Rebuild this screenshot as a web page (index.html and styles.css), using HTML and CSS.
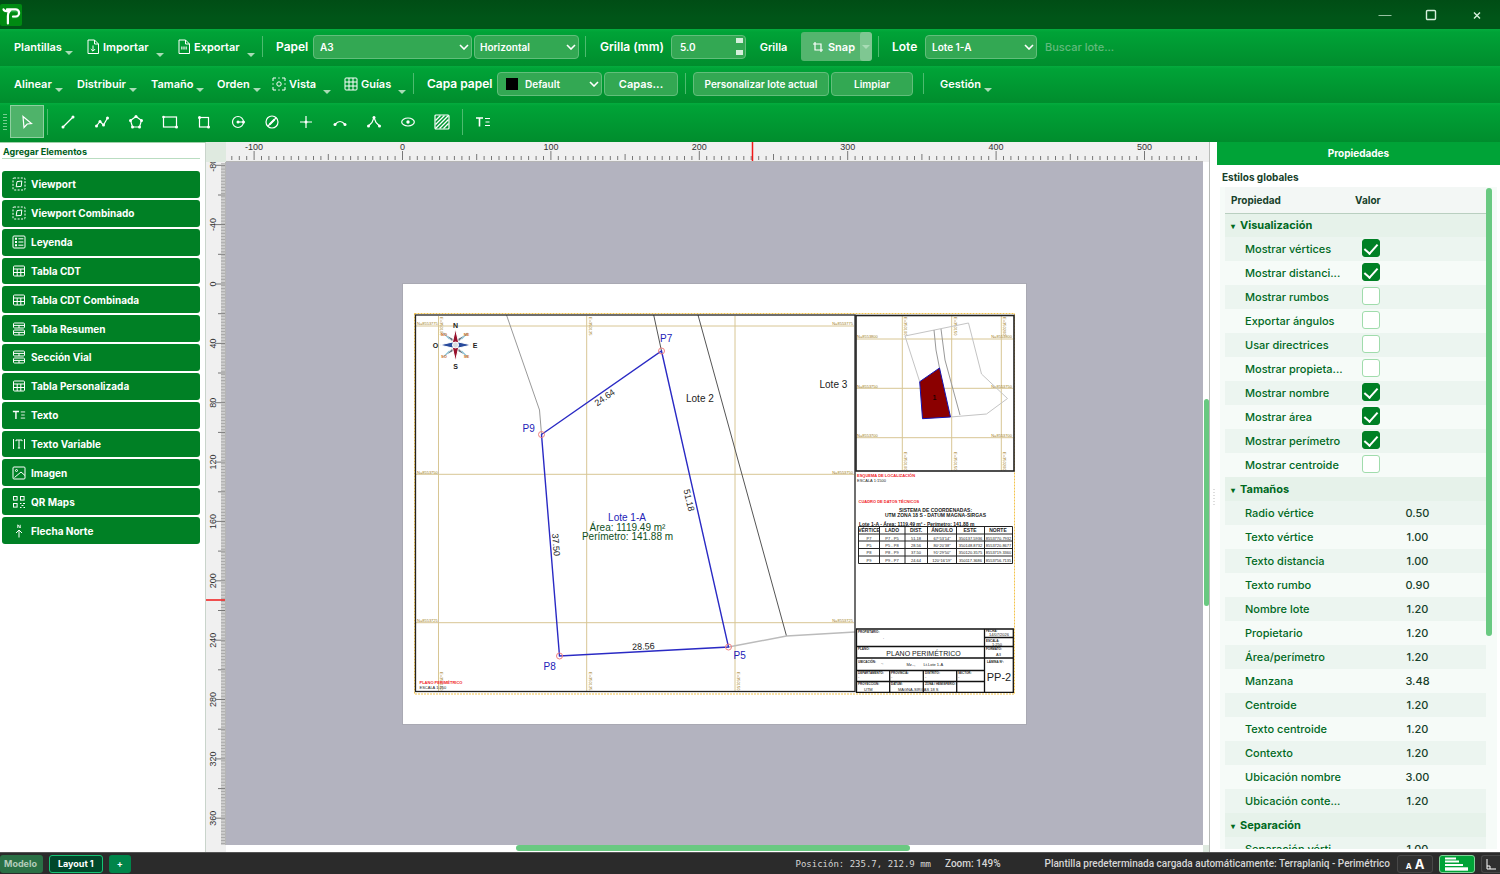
FILE: index.html
```html
<!DOCTYPE html>
<html lang="es">
<head>
<meta charset="utf-8">
<title>Terraplaniq</title>
<link rel="stylesheet" href="styles.css">
</head>
<body>
<svg class="defs" aria-hidden="true">
  <defs>
    <symbol id="i-viewport" viewBox="0 0 14 14"><rect x="1" y="1" width="12" height="12" rx="1" stroke-dasharray="2 1.4"/><path d="M5 4.6 9.8 4 9.2 9.4 4.2 9.8Z"/></symbol>
    <symbol id="i-legend" viewBox="0 0 14 14"><rect x="1" y="1" width="12" height="12" rx="1"/><path d="M3 3.8h2M3 7h2M3 10.2h2" stroke-width="2"/><path d="M6.4 3.8h5M6.4 7h5M6.4 10.2h5"/></symbol>
    <symbol id="i-table" viewBox="0 0 14 14"><rect x="1.5" y="2" width="11" height="10" rx="1"/><path d="M1.5 5h11M1.5 8.5h11M5.2 5v7M8.8 5v7"/></symbol>
    <symbol id="i-summary" viewBox="0 0 14 14"><rect x="1.5" y="1" width="11" height="5" rx="1"/><rect x="1.5" y="8" width="11" height="5" rx="1"/><path d="M1.5 3.4h11M1.5 10.4h11M7 3.4V6M7 10.4V13"/></symbol>
    <symbol id="i-text" viewBox="0 0 16 14"><path d="M1 3h7M4.5 3v8.500" stroke-width="1.600"/><path d="M10 3.500h5M10.500 7h4M10 10.500h5"/></symbol>
    <symbol id="i-textvar" viewBox="0 0 14 14"><path d="M1.500 2v10M12.500 2v10M4 4.200V3h6v1.200M7 3v8M5.800 11h2.400"/></symbol>
    <symbol id="i-image" viewBox="0 0 14 14"><rect x="1" y="1" width="12" height="12" rx="1"/><path d="M2.500 11.500 9 6l4 3.500"/><circle cx="4.500" cy="4.500" r="1"/></symbol>
    <symbol id="i-qr" viewBox="0 0 14 14"><rect x="1.500" y="1.500" width="3.600" height="3.600"/><rect x="8.500" y="1.500" width="3.600" height="3.600"/><rect x="1.500" y="8.500" width="3.600" height="3.600"/><path d="M8 8.500h1.500M11 8.500h2M9.500 10.500h2M8 12.500h1.500M11.500 12.500h1.500"/></symbol>
    <symbol id="i-north" viewBox="0 0 14 14"><path d="M5.800 4V.8L8.200 4V.8" stroke-width=".9"/><path d="M7 13.500V6.500M4 9l3-3 3 3"/></symbol>
  </defs>
</svg>
<div class="app">
  <header class="titlebar">
    <svg class="logo" viewBox="0 0 22 22" aria-label="Terraplaniq"><rect width="22" height="22" rx="2" fill="#008a12"/><path d="M4 7.500h11.500a2.800 2.800 0 0 1 0 6H12" fill="none" stroke="#4fd07a" stroke-width="1.500" opacity=".5"/><path d="M3.500 5.300Q4 7.300 7 7.200H9.500Q7.800 9 7.900 12v7.500M7 5.300h8.500a3.600 3.600 0 0 1 0 7.200H13" fill="none" stroke="#fff" stroke-width="2.200" stroke-linecap="round"/></svg>
    <div class="window-buttons">
      <button type="button" aria-label="Minimizar"><svg viewBox="0 0 14 14"><path d="M.5 7.500h13" opacity=".7"/></svg></button>
      <button type="button" aria-label="Maximizar"><svg viewBox="0 0 14 14"><rect x="2.500" y="2.500" width="9" height="9" rx="1" stroke-width="1.400"/></svg></button>
      <button type="button" aria-label="Cerrar"><svg viewBox="0 0 14 14"><path d="M4 4.500l6 6M10 4.500l-6 6" stroke-width="1.400"/></svg></button>
    </div>
  </header>

  <div class="bar bar-paper">
    <button type="button" class="menu">Plantillas</button>
    <button type="button" class="menu menu-icon"><svg viewBox="0 0 14 16"><path d="M2 1h6.500L12.500 5v9.500H2zM8.500 1v4h4"/><path d="M7 6.500v5.500M4.800 10 7 12.200 9.200 10"/></svg>Importar</button>
    <button type="button" class="menu menu-icon"><svg viewBox="0 0 14 16"><path d="M2 1h6.500L12.500 5v9.500H2zM8.500 1v4h4"/><path d="M4 9h6.500" stroke-width="3" stroke-dasharray="1.600 .6" opacity=".7"/></svg>Exportar</button>
    <i class="sep"></i>
    <label class="cap" for="papel">Papel</label>
    <select id="papel" class="field"><option>A3</option></select>
    <select class="field field-tight" aria-label="Orientación"><option>Horizontal</option></select>
    <i class="sep"></i>
    <label class="cap" for="grilla">Grilla (mm)</label>
    <div class="spin field"><input id="grilla" value="5.0"><span class="steps"><button type="button" aria-label="Subir"></button><button type="button" aria-label="Bajar"></button></span></div>
    <button type="button" class="flat">Grilla</button>
    <div class="snap"><button type="button" class="snap-main"><svg viewBox="0 0 12 12"><path d="M3 1v8h8M1 3h8v8" stroke-width="1.200"/></svg>Snap</button><button type="button" class="snap-more" aria-label="Opciones de snap"></button></div>
    <i class="sep"></i>
    <label class="cap" for="lote">Lote</label>
    <select id="lote" class="field"><option>Lote 1-A</option></select>
    <input class="search" type="text" placeholder="Buscar lote..." aria-label="Buscar lote">
  </div>

  <div class="bar bar-arrange">
    <button type="button" class="menu">Alinear</button>
    <button type="button" class="menu">Distribuir</button>
    <button type="button" class="menu">Tamaño</button>
    <button type="button" class="menu">Orden</button>
    <button type="button" class="menu menu-icon"><svg viewBox="0 0 14 16"><path d="M1 5V2h3M10 2h3v3M13 11v3h-3M4 14H1v-3M1 7.300v1.400M13 7.300v1.400M6.300 2h1.400M6.300 14h1.400"/><circle cx="7" cy="8" r="2.200"/></svg>Vista</button>
    <button type="button" class="menu menu-icon"><svg viewBox="0 0 14 16"><rect x="1" y="2" width="12" height="12" rx="1"/><path d="M5 2v12M9 2v12M1 6h12M1 10h12"/></svg>Guías</button>
    <i class="sep"></i>
    <label class="cap" for="capa">Capa papel</label>
    <div class="layer"><i class="swatch"></i><select id="capa" class="field"><option>Default</option></select></div>
    <button type="button" class="field push push-large">Capas...</button>
    <i class="sep"></i>
    <button type="button" class="field push">Personalizar lote actual</button>
    <button type="button" class="field push">Limpiar</button>
    <i class="sep"></i>
    <button type="button" class="menu">Gestión</button>
  </div>

  <div class="bar bar-draw">
    <i class="grip"></i>
    <button type="button" class="tool tool-on" aria-label="Seleccionar"><svg viewBox="0 0 16 16"><path d="M4 2.500 12.500 9.500 8.200 10 5 13.500Z"/></svg></button>
    <i class="sep"></i>
    <button type="button" class="tool" aria-label="Línea"><svg viewBox="0 0 16 16"><path d="M3 13 13 3"/><g class="dot"><circle cx="3" cy="13" r="1.500"/><circle cx="13" cy="3" r="1.500"/></g></svg></button>
    <button type="button" class="tool" aria-label="Polilínea"><svg viewBox="0 0 16 16"><path d="M2.500 12 6 7.500 9.500 11 13.500 4"/><g class="dot"><circle cx="2.500" cy="12" r="1.500"/><circle cx="6" cy="7.500" r="1.500"/><circle cx="9.500" cy="11" r="1.500"/><circle cx="13.500" cy="4" r="1.500"/></g></svg></button>
    <button type="button" class="tool" aria-label="Polígono"><svg viewBox="0 0 16 16"><path d="M8 2.500 13.500 6.500 11.500 13h-7L2.500 6.500Z"/><g class="dot"><circle cx="8" cy="2.500" r="1.500"/><circle cx="13.500" cy="6.500" r="1.500"/><circle cx="11.500" cy="13" r="1.500"/><circle cx="4.500" cy="13" r="1.500"/><circle cx="2.500" cy="6.500" r="1.500"/></g></svg></button>
    <button type="button" class="tool" aria-label="Rectángulo"><svg viewBox="0 0 16 16"><rect x="1.500" y="3" width="13" height="10"/><g class="dot"><circle cx="1.500" cy="3" r="1.300"/><circle cx="14.500" cy="13" r="1.500"/></g></svg></button>
    <button type="button" class="tool" aria-label="Rectángulo rotado"><svg viewBox="0 0 16 16"><rect x="3.500" y="3.500" width="9" height="9.500"/><g class="dot"><circle cx="3.500" cy="3.500" r="1.500"/><circle cx="12.500" cy="13" r="1.500"/></g></svg></button>
    <button type="button" class="tool" aria-label="Círculo"><svg viewBox="0 0 16 16"><circle cx="8" cy="8" r="5.500"/><path d="M8 8h5.500"/><g class="dot"><circle cx="8" cy="8" r="1.500"/><circle cx="13.500" cy="8" r="1.500"/></g></svg></button>
    <button type="button" class="tool" aria-label="Círculo por diámetro"><svg viewBox="0 0 16 16"><circle cx="8" cy="8" r="6"/><path d="M4 12 12 4"/><path d="M5.500 10.500 10.500 5.500" stroke-width="2"/></svg></button>
    <button type="button" class="tool" aria-label="Punto"><svg viewBox="0 0 16 16"><path d="M8 2v12M2 8h12"/><g class="dot"><circle cx="8" cy="8" r="1.500"/></g></svg></button>
    <button type="button" class="tool" aria-label="Arco"><svg viewBox="0 0 16 16"><path d="M3 10.500Q8 4.500 13 10.500"/><g class="dot"><circle cx="3" cy="10.500" r="1.500"/><circle cx="13" cy="10.500" r="1.500"/></g></svg></button>
    <button type="button" class="tool" aria-label="Ángulo"><svg viewBox="0 0 16 16"><path d="M2.500 12 6 8.500 8 3.500 10 8.500 13.500 12"/><g class="dot"><circle cx="2.500" cy="12" r="1.500"/><circle cx="8" cy="3.500" r="1.500"/><circle cx="13.500" cy="12" r="1.500"/></g></svg></button>
    <button type="button" class="tool" aria-label="Elipse"><svg viewBox="0 0 16 16"><ellipse cx="8" cy="8" rx="6.300" ry="4"/><g class="dot"><circle cx="8" cy="8" r="1.700"/></g></svg></button>
    <button type="button" class="tool" aria-label="Sombreado"><svg viewBox="0 0 16 16"><rect x="1" y="1" width="14" height="14" rx="1"/><path d="M1.500 6.500 6.500 1.500M1.500 10.500 10.500 1.500M1.500 14.500 14.500 1.500M5.500 14.500 14.500 5.500M9.500 14.500 14.500 9.500" stroke-width="1.400"/></svg></button>
    <i class="sep"></i>
    <button type="button" class="tool" aria-label="Texto"><svg viewBox="0 0 16 14"><use href="#i-text"/></svg></button>
  </div>

  <main class="body">
    <aside class="elements">
      <h2 class="elements-title">Agregar Elementos</h2>
      <div class="elements-list">
        <button type="button"><svg><use href="#i-viewport"/></svg>Viewport</button>
        <button type="button"><svg><use href="#i-viewport"/></svg>Viewport Combinado</button>
        <button type="button"><svg><use href="#i-legend"/></svg>Leyenda</button>
        <button type="button"><svg><use href="#i-table"/></svg>Tabla CDT</button>
        <button type="button"><svg><use href="#i-table"/></svg>Tabla CDT Combinada</button>
        <button type="button"><svg><use href="#i-summary"/></svg>Tabla Resumen</button>
        <button type="button"><svg><use href="#i-summary"/></svg>Sección Vial</button>
        <button type="button"><svg><use href="#i-table"/></svg>Tabla Personalizada</button>
        <button type="button"><svg><use href="#i-text"/></svg>Texto</button>
        <button type="button"><svg><use href="#i-textvar"/></svg>Texto Variable</button>
        <button type="button"><svg><use href="#i-image"/></svg>Imagen</button>
        <button type="button"><svg><use href="#i-qr"/></svg>QR Maps</button>
        <button type="button"><svg><use href="#i-north"/></svg>Flecha Norte</button>
      </div>
    </aside>

    <section class="viewer" aria-label="Lienzo">
      <div class="corner"></div>
      <svg class="ruler ruler-x" id="ruler-x"></svg>
      <div class="edge"></div>
      <svg class="ruler ruler-y" id="ruler-y"></svg>
      <div class="stage">
        <svg class="sheet" viewBox="403 284 623 440">
          <rect x="403" y="284" width="623" height="440" fill="#fff"/>
          <rect x="414.500" y="313.500" width="600" height="380.500" class="n" stroke="#f3c34a" stroke-dasharray="2 1"/>
          <g class="n tan"><path d="M438.500 316V691M586.700 316V691M735 316V691M416 326H854M416 474.300H854M416 622.700H854"/><path d="M902.300 316V471M951.700 316V471M1001.300 316V471M856 339H1013M856 388.300H1013M856 437.700H1013"/></g>
          <g class="geo">
            <text x="417" y="325">N=8553775</text><text x="417" y="473.500">N=8553750</text><text x="417" y="622">N=8553725</text>
            <text x="853" y="325" text-anchor="end">N=8553775</text><text x="853" y="473.500" text-anchor="end">N=8553750</text><text x="853" y="622" text-anchor="end">N=8553725</text>
            <text x="857" y="338">N=8553800</text><text x="857" y="387.500">N=8553750</text><text x="857" y="437">N=8553700</text>
            <text x="1012" y="338" text-anchor="end">N=8553800</text><text x="1012" y="387.500" text-anchor="end">N=8553750</text><text x="1012" y="437" text-anchor="end">N=8553700</text>
            <text transform="translate(440 317) rotate(90)">E=350100</text><text transform="translate(588.500 317) rotate(90)">E=350125</text>
            <text transform="translate(440 672) rotate(90)">E=350100</text><text transform="translate(588.500 672) rotate(90)">E=350125</text><text transform="translate(737 672) rotate(90)">E=350150</text>
            <text transform="translate(904 317) rotate(90)">E=350100</text><text transform="translate(953.500 317) rotate(90)">E=350150</text><text transform="translate(1003 317) rotate(90)">E=350200</text>
            <text transform="translate(904 452) rotate(90)">E=350100</text><text transform="translate(953.500 452) rotate(90)">E=350150</text><text transform="translate(1003 452) rotate(90)">E=350200</text>
          </g>
          <path class="n" stroke="#999" d="M506.500 315 539.500 410 541.500 434"/>
          <path class="n" stroke="#555" d="M653.700 315 661.500 351M698 315 786.500 636"/>
          <path class="n" stroke="#bbb" stroke-width="1.500" d="M728.500 647 786.500 636 855 632"/>
          <path class="n" stroke="#2a2ac4" stroke-width="1.400" d="M661.500 351 728.500 647 559.500 656 541.500 434.500Z"/>
          <g class="n" stroke="#f08080"><circle cx="661.500" cy="351" r="3"/><circle cx="541.500" cy="434.500" r="3"/><circle cx="559.500" cy="656" r="3"/><circle cx="728.500" cy="647" r="3"/></g>
          <g class="tag blue"><text x="660" y="342">P7</text><text x="522.500" y="432">P9</text><text x="543.500" y="670">P8</text><text x="733.500" y="659">P5</text><text x="627" y="521" text-anchor="middle">Lote 1-A</text></g>
          <g class="tag green" text-anchor="middle"><text x="627.500" y="530.500">Área: 1119.49 m²</text><text x="627.500" y="539.500">Perímetro: 141.88 m</text></g>
          <g class="tag"><text x="686" y="402">Lote 2</text><text x="819.500" y="388">Lote 3</text></g>
          <g class="dist" text-anchor="middle"><text transform="translate(606.500 400) rotate(-35)">24.64</text><text transform="translate(686 501) rotate(77)">51.18</text><text transform="translate(553 545) rotate(85)">37.50</text><text transform="translate(643.500 649.500) rotate(-3)">28.56</text></g>
          <g>
            <g fill="#6b7580"><path d="M455.500 345 444.500 334 458 341ZM455.500 345 466.500 334 453 341ZM455.500 345 466.500 356 453 349ZM455.500 345 444.500 356 458 349Z"/></g>
            <path d="M443.500 333l6 6M467.500 333l-6 6M467.500 357l-6-6M443.500 357l6-6" stroke="#8fc6d8" stroke-width="1.200"/>
            <path d="M455.500 329 458.500 342 455.500 345 452.500 342ZM455.500 361 458.500 348 455.500 345 452.500 348Z" fill="#98102c"/>
            <path d="M439.500 345 452.500 342 455.500 345 452.500 348ZM471.500 345 458.500 342 455.500 345 458.500 348Z" fill="#284a9c"/>
            <circle cx="455.500" cy="345" r="3" fill="#d9dde2"/>
            <g class="pole"><text x="455.500" y="327.500">N</text><text x="455.500" y="368.500">S</text><text x="435.500" y="348">O</text><text x="475" y="348">E</text></g>
            <g class="diag"><text x="444" y="336">NO</text><text x="466.500" y="336">NE</text><text x="444" y="358">SO</text><text x="466.500" y="358">SE</text></g>
          </g>
          <rect class="n" x="415.500" y="315" width="439.500" height="376.500" stroke="#222" stroke-width="1.300"/>
          <rect class="n" x="856" y="315.500" width="158" height="155.500" stroke="#222" stroke-width="1.600"/>
          <path class="n" stroke="#c4c4c4" d="M919.700 381.700 905 336 968.500 323 981.500 374 1007.500 398.500 986.500 414 950.500 417"/>
          <path class="n" stroke="#999" d="M934 330 936 350 939.500 368M941 329 945 360 960 415"/>
          <path d="M919.700 381.700 939.500 368 950.500 417 922.500 418.700Z" fill="#8b0000" stroke="#1414b4"/>
          <text x="934.500" y="400" class="lot-number" text-anchor="middle">1</text>
          <g class="red"><text x="857" y="477">ESQUEMA DE LOCALIZACIÓN</text><text x="858.500" y="502.500">CUADRO DE DATOS TÉCNICOS</text><text x="419.500" y="684">PLANO PERIMÉTRICO</text></g>
          <g class="four"><text x="857" y="481.500">ESCALA 1:1500</text><text x="419.500" y="688.500">ESCALA 1:250</text></g>
          <g class="headline"><text x="935.500" y="511.500" text-anchor="middle">SISTEMA DE COORDENADAS:</text><text x="935.500" y="517" text-anchor="middle">UTM ZONA 18 S - DATUM MAGNA-SIRGAS</text><text x="859" y="525.500">Lote 1-A - Área: 1119.49 m² - Perímetro: 141.88 m</text></g>
          <path class="n" stroke="#222" d="M858.500 526.500H1012.500V563.500H858.500ZM858.500 534H1012.500M858.500 541H1012.500M858.500 548.500H1012.500M858.500 556H1012.500M879.500 526.500V563.500M905 526.500V563.500M927.500 526.500V563.500M956.500 526.500V563.500M984.500 526.500V563.500"/>
          <g class="th" text-anchor="middle"><text x="869" y="532">VÉRTICE</text><text x="892" y="532">LADO</text><text x="916" y="532">DIST.</text><text x="942" y="532">ÁNGULO</text><text x="970" y="532">ESTE</text><text x="998" y="532">NORTE</text></g>
          <g class="four" text-anchor="middle">
            <text x="869" y="539.500">P7</text><text x="892" y="539.500">P7 - P5</text><text x="916" y="539.500">51.18</text><text x="942" y="539.500">67°53'14"</text><text x="970.500" y="539.500">350137.5936</text><text x="998.500" y="539.500">8553770.7932</text>
            <text x="869" y="546.500">P5</text><text x="892" y="546.500">P5 - P8</text><text x="916" y="546.500">28.56</text><text x="942" y="546.500">80°20'38"</text><text x="970.500" y="546.500">350148.8732</text><text x="998.500" y="546.500">8553720.8677</text>
            <text x="869" y="554">P8</text><text x="892" y="554">P8 - P9</text><text x="916" y="554">37.50</text><text x="942" y="554">91°29'50"</text><text x="970.500" y="554">350120.3575</text><text x="998.500" y="554">8553719.3360</text>
            <text x="869" y="561.500">P9</text><text x="892" y="561.500">P9 - P7</text><text x="916" y="561.500">24.64</text><text x="942" y="561.500">120°16'19"</text><text x="970.500" y="561.500">350117.3686</text><text x="998.500" y="561.500">8553756.7135</text>
          </g>
          <path class="n" stroke="#111" stroke-width="1.300" d="M856.500 629H1013.300V692.300H856.500ZM984.500 629V692M856.500 646.500H1013M856.500 658H1013M984.500 637.500H1013M856.500 670.500H984.500M856.500 681.500H984.500M889.700 670.500V692M923.300 670.500V692M956.700 670.500V692"/>
          <g class="three"><text x="858" y="632.500">PROPIETARIO:</text><text x="858" y="650">PLANO:</text><text x="858" y="662.500">UBICACIÓN:</text><text x="858" y="673.500">DEPARTAMENTO:</text><text x="891" y="673.500">PROVINCIA:</text><text x="925" y="673.500">DISTRITO:</text><text x="958" y="673.500">SECTOR:</text><text x="858" y="685">PROYECCIÓN:</text><text x="891" y="685">DATUM:</text><text x="925" y="685">ZONA / HEMISFERIO:</text><text x="986" y="632">FECHA:</text><text x="986" y="641.500">ESCALA:</text><text x="986" y="650">FORMATO:</text><text x="987" y="662.500">LÁMINA N°:</text></g>
          <g class="four"><text x="989" y="636">14/07/2026</text><text x="992" y="645.500">1:250</text><text x="996" y="655.500">A3</text><text x="883" y="639">.</text><text x="881" y="664">-,</text><text x="906.500" y="666">Mz.-,</text><text x="923.500" y="666">Lt.Lote 1-A</text><text x="858" y="677.500">-</text><text x="891" y="677.500">-</text><text x="925" y="677.500">-</text><text x="958" y="677.500">-</text><text x="864" y="690.500">UTM</text><text x="898" y="690.500">MAGNA-SIRGAS 18 S</text></g>
          <text class="plan" x="923.500" y="655.500" text-anchor="middle">PLANO PERIMÉTRICO</text>
          <text class="lamina" x="999" y="680.500" text-anchor="middle">PP-2</text>
        </svg>
      </div>
      <div class="track track-y"><i class="thumb"></i></div>
      <div class="edge"></div>
      <div class="track track-x"><i class="thumb"></i></div>
      <div class="corner"></div>
    </section>

    <i class="splitter"></i>

    <aside class="props">
      <h2 class="props-title">Propiedades</h2>
      <h3 class="props-sub">Estilos globales</h3>
      <div class="tree">
        <table>
          <thead><tr><th scope="col">Propiedad</th><th scope="col">Valor</th></tr></thead>
          <tbody>
            <tr class="group"><th colspan="2" scope="rowgroup">Visualización</th></tr>
            <tr><td><label for="c1">Mostrar vértices</label></td><td class="tick"><input type="checkbox" id="c1" checked></td></tr>
            <tr><td><label for="c2">Mostrar distanci...</label></td><td class="tick"><input type="checkbox" id="c2" checked></td></tr>
            <tr><td><label for="c3">Mostrar rumbos</label></td><td class="tick"><input type="checkbox" id="c3"></td></tr>
            <tr><td><label for="c4">Exportar ángulos</label></td><td class="tick"><input type="checkbox" id="c4"></td></tr>
            <tr><td><label for="c5">Usar directrices</label></td><td class="tick"><input type="checkbox" id="c5"></td></tr>
            <tr><td><label for="c6">Mostrar propieta...</label></td><td class="tick"><input type="checkbox" id="c6"></td></tr>
            <tr><td><label for="c7">Mostrar nombre</label></td><td class="tick"><input type="checkbox" id="c7" checked></td></tr>
            <tr><td><label for="c8">Mostrar área</label></td><td class="tick"><input type="checkbox" id="c8" checked></td></tr>
            <tr><td><label for="c9">Mostrar perímetro</label></td><td class="tick"><input type="checkbox" id="c9" checked></td></tr>
            <tr><td><label for="c10">Mostrar centroide</label></td><td class="tick"><input type="checkbox" id="c10"></td></tr>
          </tbody>
          <tbody>
            <tr class="group"><th colspan="2" scope="rowgroup">Tamaños</th></tr>
            <tr><td>Radio vértice</td><td>0.50</td></tr>
            <tr><td>Texto vértice</td><td>1.00</td></tr>
            <tr><td>Texto distancia</td><td>1.00</td></tr>
            <tr><td>Texto rumbo</td><td>0.90</td></tr>
            <tr><td>Nombre lote</td><td>1.20</td></tr>
            <tr><td>Propietario</td><td>1.20</td></tr>
            <tr><td>Área/perímetro</td><td>1.20</td></tr>
            <tr><td>Manzana</td><td>3.48</td></tr>
            <tr><td>Centroide</td><td>1.20</td></tr>
            <tr><td>Texto centroide</td><td>1.20</td></tr>
            <tr><td>Contexto</td><td>1.20</td></tr>
            <tr><td>Ubicación nombre</td><td>3.00</td></tr>
            <tr><td>Ubicación conte...</td><td>1.20</td></tr>
          </tbody>
          <tbody>
            <tr class="group"><th colspan="2" scope="rowgroup">Separación</th></tr>
            <tr><td>Separación vérti...</td><td>1.00</td></tr>
          </tbody>
        </table>
        <div class="tree-track"><i class="thumb"></i></div>
      </div>
    </aside>
  </main>

  <footer class="status">
    <nav class="tabs">
      <button type="button" class="tab">Modelo</button>
      <button type="button" class="tab tab-on">Layout 1</button>
      <button type="button" class="tab tab-add" aria-label="Nuevo layout">+</button>
    </nav>
    <span class="position">Posición: 235.7, 212.9 mm</span>
    <span class="zoom">Zoom: 149%</span>
    <span class="message">Plantilla predeterminada cargada automáticamente: Terraplaniq - Perimétrico</span>
    <div class="status-tools">
      <button type="button" class="chip"><small>A</small>A</button>
      <button type="button" class="chip chip-on" aria-label="Grosor de líneas"><svg viewBox="0 0 26 16"><path d="M1 2.500h11M1 5.500h14M1 9h18" stroke-width="2"/><path d="M1 13h23" stroke-width="3.400"/></svg></button>
      <button type="button" class="chip chip-cut" aria-label="Orto"><svg viewBox="0 0 14 16"><path d="M3 3v10h9M3 10h3v3"/></svg></button>
    </div>
  </footer>
</div>
<script src="rulers.js"></script>
</body>
</html>
```

FILE: rulers.js
```js
// Draws both rulers. Scale is pixels per paper millimetre at the current zoom.
const SCALE = 1.484;
const NS = "http://www.w3.org/2000/svg";

function add(parent, name, attrs, text) {
  const el = document.createElementNS(NS, name);
  for (const key in attrs) el.setAttribute(key, attrs[key]);
  if (text !== undefined) el.textContent = text;
  parent.appendChild(el);
}

function drawX(svg, origin, cursor) {
  let d = "";
  for (let v = -115; v <= 540; v += 5) {
    const x = (origin + v * SCALE).toFixed(1);
    const len = v % 100 === 0 ? 9 : v % 50 === 0 ? 6 : 4;
    d += `M${x} 18v-${len}`;
    if (v % 100 === 0) add(svg, "text", { x, y: 8, "text-anchor": "middle" }, v);
  }
  add(svg, "path", { d, class: "ticks" });
  add(svg, "path", { d: `M${cursor} 0v19`, class: "cursor" });
}

function drawY(svg, origin, cursor) {
  let minor = "";
  let major = "";
  for (let v = -81; v <= 378; v += 1) {
    const y = (origin + v * SCALE).toFixed(1);
    if (v % 20 === 0) major += `M19 ${y}h-${v % 40 === 0 ? 10 : 7}`;
    else minor += `M19 ${y}h-4`;
    if (v % 40 === 0) add(svg, "text", { transform: `translate(10 ${y}) rotate(-90)`, "text-anchor": "middle" }, v);
  }
  add(svg, "path", { d: minor, class: "ticks ticks-fine" });
  add(svg, "path", { d: major, class: "ticks" });
  add(svg, "path", { d: `M0 ${cursor}h19`, class: "cursor" });
}

drawX(document.getElementById("ruler-x"), 176.5, 526.5);
drawY(document.getElementById("ruler-y"), 122, 438);
```

FILE: styles.css
```css
* { box-sizing: border-box; }
body { margin: 0; font-family: Inter, "Noto Sans", sans-serif; font-size: 11px; font-weight: 600; color: #fff; }
button, input, select { font: inherit; color: inherit; margin: 0; padding: 0; border: 0; background: none; }
svg { fill: none; stroke: currentColor; stroke-width: 1; }
h2, h3 { margin: 0; }
.defs { display: none; }

.app { display: grid; grid-template-rows: 29px 37px 37px 39px minmax(0, 1fr) 22px; height: 100vh; overflow: hidden; }

.titlebar { display: flex; justify-content: space-between; align-items: center; background: linear-gradient(#004d15, #005518 60%); }
.logo { width: 22px; height: 22px; stroke: none; }
.window-buttons { display: flex; color: #d5efdc; }
.window-buttons button { display: grid; place-items: center; width: 46px; height: 28px; }
.window-buttons svg { width: 14px; height: 14px; }

.bar { display: grid; align-items: center; column-gap: 2px; padding: 0 0 2px 8px; background: linear-gradient(#04ac3e, #00a337 3px, #008d2d); }
.bar-paper { grid-template-columns: 70px 89px 85px 8px 43px 159px 105px 9px 77px 75px 51px 71px 8px 39px 112px 1fr; }
.bar-arrange { grid-template-columns: 61px 72px 64px 53px 70px 70px 7px 76px 105px 74px 11px 136px 82px 17px 72px; }
.bar-draw { display: flex; column-gap: 0; padding-left: 3px; }

.sep { width: 1px; height: 21px; justify-self: center; background: #4dbb6f; }
.cap { padding-left: 8px; font-size: 12px; white-space: nowrap; }
.menu { display: flex; align-items: center; gap: 3px; padding-left: 6px; white-space: nowrap; }
.menu::after, .snap-more::after { content: ""; border: 4px solid transparent; border-top-color: #a9dcb6; border-bottom: 0; }
.menu::after { margin-top: 12px; }
.menu-icon::after { margin: 16px 0 0 4px; }
.menu svg { width: 14px; height: 16px; flex: none; }
.flat { text-align: center; }

.field { width: 100%; height: 24px; padding: 0 6px; border: 1px solid #62be7b; border-radius: 4px; background-color: #33a853; font-size: 10px; }
select.field { appearance: none; background-image: url("data:image/svg+xml,%3Csvg xmlns='http://www.w3.org/2000/svg' width='10' height='6'%3E%3Cpath d='M1 1l4 4 4-4' fill='none' stroke='white' stroke-width='1.6'/%3E%3C/svg%3E"); background-repeat: no-repeat; background-position: right 2px center; }
select.field-tight { padding: 0 5px; }
.spin { display: flex; justify-content: space-between; align-items: center; padding: 0 2px 0 8px; }
.spin input { width: 40px; outline: 0; }
.steps { display: grid; gap: 7px; }
.steps button { width: 7px; height: 5px; background: #d6efdc; }
.snap { display: grid; grid-template-columns: 1fr 12px; height: 29px; border-radius: 3px; overflow: hidden; background: #54b56e; }
.snap-main { display: flex; align-items: center; justify-content: center; gap: 4px; padding-left: 6px; }
.snap-main svg { width: 12px; height: 12px; }
.snap-more { display: grid; place-items: center; border-radius: 3px; background: #7fc792; }
.search { width: 100%; padding-left: 6px; font-weight: 500; outline: 0; }
.search::placeholder { color: #62b97c; opacity: 1; }
.layer { display: grid; align-items: center; }
.layer > * { grid-area: 1 / 1; }
.layer .field { padding-left: 27px; }
.swatch { z-index: 1; width: 12px; height: 12px; margin-left: 9px; background: #000; }
.push { text-align: center; white-space: nowrap; }
.push-large { font-size: 11px; }

.grip { width: 4px; height: 18px; background: radial-gradient(#7fd097 35%, transparent 40%) 0 0 / 2px 3px; }
.tool { display: grid; place-items: center; width: 34px; height: 33px; }
.tool svg { width: 16px; height: 16px; stroke-width: 1.2; }
.tool .dot { fill: currentColor; stroke: none; }
.tool-on { margin-left: 3px; border: 1px solid #8fd0a0; background: #4fb36a; }
.bar-draw .sep { height: 26px; margin: 0 3px; }

.body { display: grid; grid-template-columns: 206px minmax(0, 1fr) 7px 283px; min-height: 0; background: #fff; }

.elements { padding: 3px 5px 0 2px; border-right: 1px solid #c9d4cb; border-top: 1px solid #9fd0a9; }
.elements-title { height: 13px; padding-left: 1px; border-bottom: 1px solid #b9ddc1; font-size: 9px; line-height: 12px; font-weight: 700; color: #00601c; }
.elements-list { display: grid; grid-auto-rows: 1fr; gap: 2px; height: 373px; margin-top: 12px; font-size: 10px; font-weight: 700; }
.elements-list button { display: flex; align-items: center; gap: 5px; padding-left: 10px; border-radius: 3px; background: #008025; text-align: left; }
.elements-list svg { width: 14px; height: 14px; flex: none; }

.viewer { display: grid; grid-template: 20px minmax(0, 1fr) 7px / 20px minmax(0, 1fr) 6px; border-right: 1px solid #b9bcb9; overflow: hidden; }
.corner { background: #dfeae0; }
.edge { background: #f0f0f0; }
.ruler { display: block; width: 100%; height: 100%; background: #f0f0f0; font-family: "Liberation Sans", Arial, sans-serif; font-size: 9px; font-weight: 400; overflow: hidden; }
.ruler text { fill: #333; stroke: none; }
.ruler .ticks { stroke: #777; }
.ruler .ticks-fine { stroke: #aaa; }
.ruler .cursor { stroke: #f01818; stroke-width: 1.500; }
.ruler-x { border-bottom: 1px solid #b5b5b5; }
.ruler-y { border-right: 1px solid #b5b5b5; }
.stage { position: relative; background: #b3b3bf; overflow: hidden; }
.sheet { position: absolute; left: 177px; top: 122px; width: 623px; height: 440px; outline: 1px solid #a9a9b3; }
.track { display: grid; background: #fff; }
.thumb { display: block; border-radius: 3px; background: #69c981; }
.track-y { padding-left: 1px; grid-template-rows: 237fr 208fr 239fr; }
.track-y .thumb { grid-row: 2; }
.track-x { padding-bottom: 1px; grid-template-columns: 290fr 395fr 293fr; }
.track-x .thumb { grid-column: 2; }

.sheet { font-family: "Liberation Sans", Arial, sans-serif; font-weight: 400; }
.sheet text { fill: #222; stroke: none; }
.sheet .n { fill: none; }
.sheet .tan { stroke: #d8c694; }
.sheet .geo text { fill: #a07c20; font-size: 4px; }
.sheet .tag { font-size: 10px; }
.sheet .blue text { fill: #2222b8; }
.sheet .green text { fill: #0f4f1c; }
.sheet .dist { font-size: 9px; }
.sheet .lot-number { font-size: 8px; fill: #000; }
.sheet .pole { font-size: 7px; font-weight: 700; text-anchor: middle; }
.sheet .diag { font-size: 4px; font-weight: 700; text-anchor: middle; }
.sheet .diag text { fill: #d07028; }
.sheet .red { font-size: 4px; font-weight: 700; }
.sheet .red text { fill: #f01c28; }
.sheet .four { font-size: 4px; }
.sheet .three { font-size: 3px; font-weight: 700; }
.sheet .th { font-size: 5px; font-weight: 700; }
.sheet .headline { font-size: 5px; font-weight: 700; }
.sheet .plan { font-size: 7px; }
.sheet .lamina { font-size: 11px; }

.splitter { align-self: center; justify-self: center; width: 2px; height: 16px; background: repeating-linear-gradient(#ddd 0 1px, transparent 1px 3px); }

.props { display: grid; grid-template-rows: 23px 22px minmax(0, 1fr); min-height: 0; padding-bottom: 3px; }
.props-title { background: #00a337; text-align: center; font-size: 10px; line-height: 23px; font-weight: 700; }
.props-sub { padding-left: 5px; font-size: 10px; line-height: 24px; font-weight: 700; color: #173f2a; }
.tree { display: grid; grid-template-columns: minmax(0, 1fr) 6px; align-items: start; margin: 0 3px; padding: 0 5px; overflow: hidden; background: #f6fbf8; }
.tree table { width: 100%; border-collapse: collapse; table-layout: fixed; font-weight: 500; color: #00691e; }
.tree th { text-align: left; font-weight: 700; }
.tree tr { height: 24px; }
.tree th, .tree td { padding: 0; }
.tree td { padding-left: 20px; white-space: nowrap; }
.tree td:last-child { padding: 0; text-align: center; color: #173f2a; }
.tree td.tick:last-child { padding-left: 13px; text-align: left; }
.tree tbody tr:nth-child(even) { background: #ecf5f0; }
.tree thead th { height: 26px; padding-left: 6px; border-bottom: 1px solid #b9cfc0; background: #f3f7f5; font-size: 10px; color: #173f2a; }
.tree thead th:first-child { width: 124px; }
.tree .group { background: #e6f2ea; }
.tree .group th::before { content: "▾"; display: inline-block; width: 9px; font-size: 8px; }
.tree .group th { padding-left: 6px; }
.tree input { display: grid; place-items: start center; appearance: none; width: 18px; height: 18px; margin-top: -3px; border: 1px solid #a0dcac; border-radius: 3px; background: #fff; }
.tree input:checked { border-color: #008025; background: #008025; }
.tree input:checked::after { content: ""; width: 6px; height: 11px; margin-top: 1px; border: solid #fff; border-width: 0 2px 2px 0; transform: rotate(42deg); }
.tree-track .thumb { height: 448px; margin-top: 1px; }

.status { display: flex; align-items: center; border-top: 1px solid #555; background: #2b2b2b; font-family: Roboto, Inter, sans-serif; font-size: 10px; font-weight: 500; color: #d6d6d6; white-space: nowrap; }
.tabs { display: flex; gap: 6px; margin-right: auto; font-family: Inter, sans-serif; }
.tab { height: 18px; padding: 0 9px; border-radius: 3px; background: #2a7045; font-size: 9px; font-weight: 700; color: #b3ccbb; }
.tab:first-child { padding: 0 6px 0 4px; }
.tab-on { padding: 0 8px; border: 1px solid #16c274; background: #00482a; color: #fff; }
.tab-add { background: #00854a; padding: 0 8px; color: #fff; }
.position { font-family: "DejaVu Sans Mono", monospace; font-size: 9px; }
.zoom { margin: 0 44px 0 14px; }
.status-tools { display: flex; gap: 6px; margin-left: 7px; font-family: Inter, sans-serif; }
.chip { display: flex; align-items: baseline; justify-content: center; gap: 3px; width: 36px; height: 18px; border: 1px solid #484848; border-radius: 3px; background: #303030; font-size: 13px; line-height: 16px; font-weight: 700; color: #fff; }
.chip small { font-size: 8px; }
.chip svg { width: 26px; height: 16px; }
.chip-on { border-color: #7fd097; background: #00a337; }
.chip-cut { width: 19px; border-right: 0; border-radius: 3px 0 0 3px; }
.chip-cut svg { width: 14px; }
```
